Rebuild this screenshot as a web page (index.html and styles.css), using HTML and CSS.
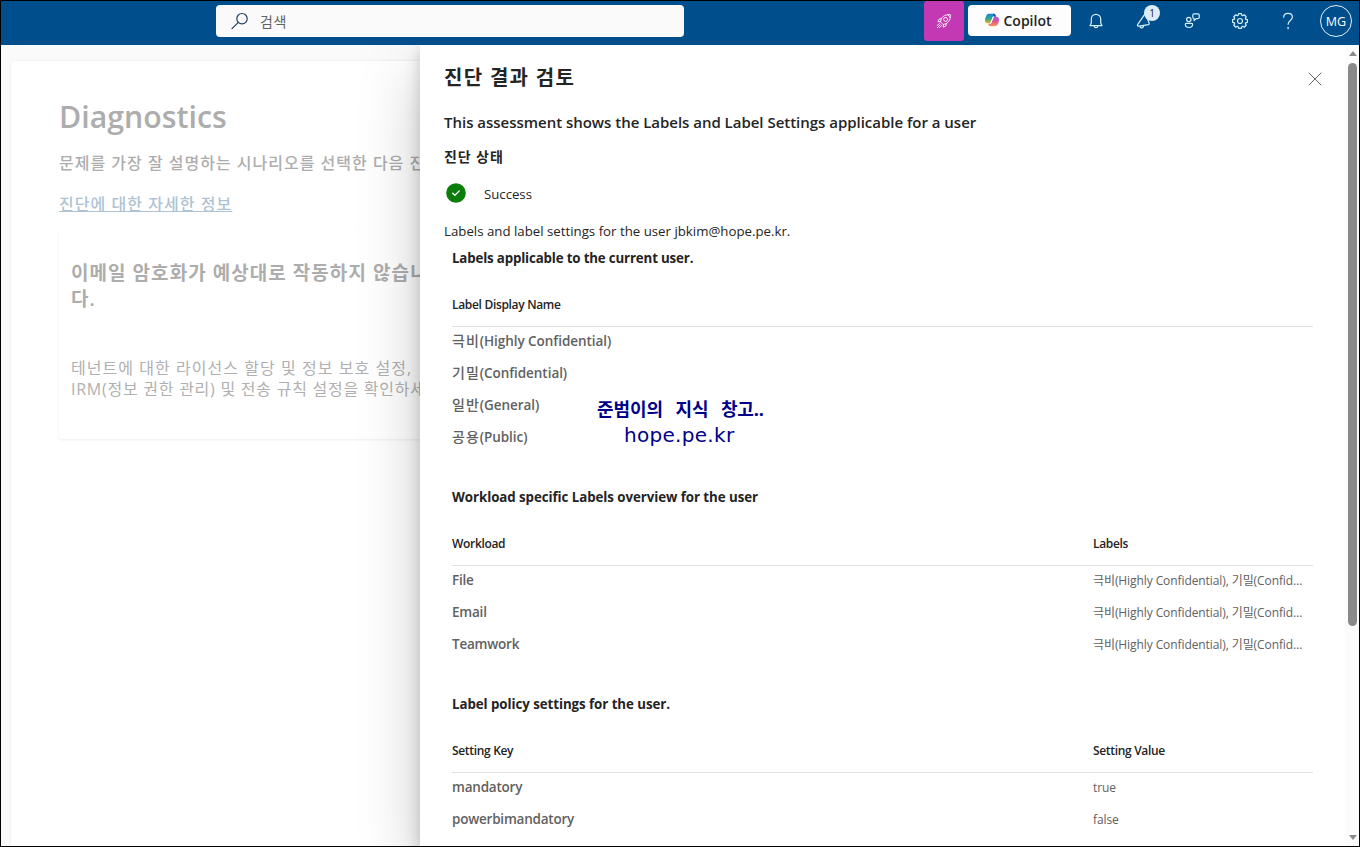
FILE: index.html
```html
<!DOCTYPE html>
<html lang="ko">
<head>
    <meta charset="UTF-8">
    <meta name="viewport" content="width=device-width, initial-scale=1.0">
    <title>Diagnostics</title>
    <link rel="stylesheet" href="styles.css">
</head>
<body>
    <div class="window">
        <header class="topbar">
            <div class="search">
                <svg width="18" height="18" viewBox="0 0 18 18"><circle cx="11" cy="6.7" r="5.2"/><path d="M7.3 10.4 1 16.7"/></svg>
                <span>검색</span>
            </div>
            <div class="actions">
                <button class="rocket">
                    <svg width="16" height="16" viewBox="0 0 16 16">
                        <path d="M4.6 8.6C4.8 4.4 8 1.3 14.3 1.6 14.8 7.8 11.7 11 7.4 11.4z"/>
                        <circle cx="9.6" cy="6.4" r="2"/>
                        <path d="M5.3 5.6 3 6.2 1.9 8.7l2.7-.1M10.4 10.7l-.6 2.3-2.5 1.2.1-2.8M11.6 1.7l2.7 2.8M3.5 10.4 1.2 12.5M5.6 12.5l-2.2 2.3M4.3 11.7 1.3 14.7"/>
                    </svg>
                </button>
                <button class="copilot">
                    <svg width="14" height="14" viewBox="0 0 14 14">
                        <defs>
                            <linearGradient id="cp-left" x1="0" y1="0" x2="0" y2="1"><stop offset="0" stop-color="#1683d8"/><stop offset=".55" stop-color="#35a884"/><stop offset="1" stop-color="#e9b52d"/></linearGradient>
                            <linearGradient id="cp-right" x1="0" y1="0" x2="0" y2="1"><stop offset="0" stop-color="#9b5be0"/><stop offset=".5" stop-color="#e2558c"/><stop offset="1" stop-color="#f39a58"/></linearGradient>
                        </defs>
                        <path fill="url(#cp-left)" d="M4.5.8h4c1.2 0 1.8.7 2.1 1.6l.3.9H9.2c-1 0-1.5.6-1.8 1.5L6.3 8.6C6 9.6 5.4 10.2 4.3 10.2H2.6C.9 10.2 0 9.2 0 7.6 0 5.5.7 3.6 1.5 2.2 2.2 1.2 3.2.8 4.5.8z"/>
                        <path fill="url(#cp-right)" d="M9.5 13.2h-4c-1.2 0-1.8-.7-2.1-1.6l-.3-.9h1.7c1 0 1.5-.6 1.8-1.5l1.1-3.8C8 4.4 8.6 3.8 9.7 3.8h1.7c1.7 0 2.6 1 2.6 2.6 0 2.1-.7 4-1.5 5.4-.7 1-1.7 1.4-3 1.4z"/>
                        <path fill="#2255b8" d="M8 .8h.6c1.1 0 1.7.7 2 1.5l.5 1.5H9.7c-.8 0-1-.5-1.2-1.2z"/>
                        <path stroke="#fff" stroke-width="1.1" d="M8.2 4.300 5.800 9.900"/>
                    </svg>
                    <span>Copilot</span>
                </button>
                <button class="icon">
                    <svg width="16" height="16" viewBox="0 0 16 16"><path d="M2 12.7h12l-1.3-2.7V6a4.7 4.7 0 0 0-9.4 0v4zM6.2 12.9a1.8 1.8 0 0 0 3.6 0"/></svg>
                </button>
                <button class="icon">
                    <svg width="16" height="16" viewBox="0 0 16 16"><path d="M8.8 1.2 1.6 11.7c-.4.7-.2 1.3.5 1.5h1l9.3-1.6c.9-.2 1.1-.7.8-1.4L9.7 1.3c-.2-.5-.6-.5-.9-.1zM4 13.2c.3 1.5 1.3 2 2.4 1.5.8-.4 1.2-1.1 1.1-2"/></svg>
                    <span class="badge">1</span>
                </button>
                <button class="icon">
                    <svg width="16" height="16" viewBox="0 0 16 16"><circle cx="4.8" cy="6.5" r="2.2"/><path d="M2.2 10.4h5.5c.6 0 .9.3.9.9 0 2-1.3 3.2-3.6 3.2s-3.7-1.2-3.7-3.2c0-.6.3-.9.9-.9zM10.1.8h3.6c.9 0 1.6.6 1.6 1.5v1.8c0 .9-.7 1.5-1.6 1.5h-1.5L10.1 7.5V5.5c-.8-.1-1.3-.7-1.3-1.5V2.3c0-.9.5-1.5 1.3-1.5z"/></svg>
                </button>
                <button class="icon">
                    <svg width="18" height="18" viewBox="-9 -9 18 18"><path d="M-1.4-7.4H1.4L1.9-5.6 2.62-5.3 4.24-6.22 6.22-4.24 5.3-2.62 5.6-1.9 7.4-1.4V1.4L5.6 1.9 5.3 2.62 6.22 4.24 4.24 6.22 2.62 5.3 1.9 5.6 1.4 7.4H-1.4L-1.9 5.6-2.62 5.3-4.24 6.22-6.22 4.24-5.3 2.62-5.6 1.9-7.4 1.4V-1.4L-5.6-1.9-5.3-2.62-6.22-4.24-4.24-6.22-2.62-5.3-1.9-5.6z"/><circle r="2.5"/></svg>
                </button>
                <button class="icon">
                    <svg width="16" height="18" viewBox="0 0 16 18"><path d="M3.7 5.2C3.7 2.7 5.4 1.3 8 1.3s4.4 1.5 4.4 3.8c0 3.3-4.3 3.5-4.3 7.2"/><path d="M8.1 15.3v1.5"/></svg>
                </button>
                <div class="avatar">MG</div>
            </div>
        </header>

        <div class="content">
            <main class="page">
                <h1>Diagnostics</h1>
                <p class="desc">문제를 가장 잘 설명하는 시나리오를 선택한 다음 진단을 실행하세요.</p>
                <a class="more" href="#">진단에 대한 자세한 정보</a>
                <div class="scenario">
                    <h2>이메일 암호화가 예상대로 작동하지 않습니<br>다.</h2>
                    <p>테넌트에 대한 라이선스 할당 및 정보 보호 설정,<br><span>IRM(정보 권한 관리) 및 전송 규칙 설정을 확인하세요.</span></p>
                </div>
            </main>

            <aside class="panel">
                <div class="panel-body">
                    <div class="panel-head">
                        <h2>진단 결과 검토</h2>
                        <svg class="close" width="14" height="14" viewBox="0 0 14 14"><path d="M1 1l12 12M13 1 1 13"/></svg>
                    </div>
                    <h3 class="assessment">This assessment shows the Labels and Label Settings applicable for a user</h3>
                    <h4 class="status-title">진단 상태</h4>
                    <div class="status">
                        <svg width="20" height="20" viewBox="0 0 20 20"><circle cx="10" cy="10" r="9.8"/><path d="M6.7 10.2 8.9 12.3 13.3 7.9"/></svg>
                        <span>Success</span>
                    </div>
                    <p class="summary">Labels and label settings for the user jbkim@hope.pe.kr.</p>

                    <section>
                        <h5 class="tight">Labels applicable to the current user.</h5>
                        <div class="row head"><span>Label Display Name</span></div>
                        <div class="row label"><b><i>극비</i>(Highly Confidential)</b></div>
                        <div class="row label"><b><i>기밀</i>(Confidential)</b></div>
                        <div class="row label"><b><i>일반</i>(General)</b></div>
                        <div class="row label"><b><i>공용</i>(Public)</b></div>
                    </section>

                    <section>
                        <h5>Workload specific Labels overview for the user</h5>
                        <div class="row head"><span>Workload</span><span>Labels</span></div>
                        <div class="row"><b>File</b><span>극비(Highly Confidential), 기밀(Confidential), 일반(General)</span></div>
                        <div class="row"><b>Email</b><span>극비(Highly Confidential), 기밀(Confidential), 일반(General)</span></div>
                        <div class="row"><b>Teamwork</b><span>극비(Highly Confidential), 기밀(Confidential), 일반(General)</span></div>
                    </section>

                    <section>
                        <h5>Label policy settings for the user.</h5>
                        <div class="row head"><span>Setting Key</span><span>Setting Value</span></div>
                        <div class="row"><b>mandatory</b><span>true</span></div>
                        <div class="row"><b>powerbimandatory</b><span>false</span></div>
                    </section>

                    <div class="watermark">
                        <div class="wm-ko">준범이의 지식 창고..</div>
                        <div class="wm-en">hope.pe.kr</div>
                    </div>
                </div>
                <div class="scrollbar">
                    <i class="up"></i>
                    <i class="thumb"></i>
                    <i class="down"></i>
                </div>
            </aside>
        </div>
    </div>
</body>
</html>
```
FILE: styles.css
```css
* {
    box-sizing: border-box;
}
body {
    margin: 0;
    font-family: "Open Sans", "Noto Sans CJK KR", sans-serif;
    color: #242424;
}
h1, h2, h3, h4, h5, p {
    margin: 0;
    font-weight: 600;
    white-space: nowrap;
}
svg {
    display: block;
    fill: none;
    stroke-linejoin: round;
    stroke-linecap: round;
}
button {
    border: none;
    padding: 0;
    background: none;
    font-family: inherit;
}
.window {
    width: 1360px;
    height: 847px;
    border: 1px solid #000;
    display: flex;
    flex-direction: column;
    overflow: hidden;
}

/* top bar */
.topbar {
    height: 44px;
    flex: none;
    background: #004e8c;
    display: flex;
    justify-content: space-between;
    padding-left: 215px;
}
.search {
    width: 468px;
    height: 32px;
    margin-top: 4px;
    padding-left: 15px;
    border-radius: 4px;
    background: #fafafa;
    display: flex;
    align-items: center;
    gap: 11px;
    font-size: 14px;
    letter-spacing: .5px;
    color: #616161;
}
.search svg {
    stroke: #1f3f63;
    stroke-width: 1.2;
}
.search span {
    margin-top: -1px;
}
.actions {
    display: flex;
    height: 40px;
    align-items: center;
}
.rocket {
    width: 40px;
    height: 40px;
    border-radius: 3px;
    background: #c239b3;
    display: flex;
    align-items: center;
    justify-content: center;
    margin-right: 4px;
}
.rocket svg {
    stroke: #fff;
    stroke-width: .9;
}
.copilot {
    width: 103px;
    height: 31px;
    margin: 0 1px 2px 0;
    padding-right: 2px;
    border-radius: 4px;
    background: #fdfdfd;
    display: flex;
    align-items: center;
    justify-content: center;
    gap: 4px;
    font-size: 14px;
    font-weight: 600;
    color: #242424;
}
.icon {
    position: relative;
    width: 48px;
    height: 40px;
    display: flex;
    align-items: center;
    justify-content: center;
}
.icon svg {
    stroke: #d4f2ff;
    stroke-width: 1.2;
}
.badge {
    position: absolute;
    left: 24px;
    top: 4px;
    width: 16px;
    height: 16px;
    border-radius: 50%;
    background: #dcecf9;
    color: #242424;
    font-size: 10px;
    line-height: 16px;
    text-align: center;
}
.avatar {
    width: 32px;
    height: 32px;
    margin: 0 7px 0 8px;
    border: 1px solid #e3f1fb;
    border-radius: 50%;
    color: #fff;
    font-size: 12.5px;
    line-height: 32px;
    text-align: center;
}

/* page behind the panel */
.content {
    flex: 1;
    min-height: 0;
    display: flex;
    background: #fafafa;
    overflow: hidden;
}
.page {
    width: 409px;
    flex: none;
    margin: 16px 0 0 10px;
    padding: 36px 0 0 48px;
    background: #fff;
    border-radius: 4px 0 0 0;
    box-shadow: 0 0 3px rgba(0, 0, 0, .08);
    color: #adadad;
}
.page h1 {
    font-size: 30.3px;
    line-height: 40px;
}
.page .desc {
    margin-top: 14px;
    font-size: 16px;
    line-height: 24px;
    letter-spacing: 1px;
    font-weight: 500;
}
.page .more {
    display: inline-block;
    margin-top: 17px;
    font-size: 16px;
    line-height: 24px;
    letter-spacing: 1.05px;
    font-weight: 500;
    color: #adc3d3;
}
.scenario {
    height: 209px;
    margin-top: 14px;
    padding: 30px 0 0 12px;
    border-radius: 4px 0 0 4px;
    box-shadow: 0 1px 3px rgba(0, 0, 0, .08);
}
.scenario h2 {
    font-size: 19px;
    line-height: 26px;
    letter-spacing: 1.05px;
}
.scenario p {
    margin-top: 46px;
    font-size: 16px;
    line-height: 21px;
    letter-spacing: 1.05px;
    font-weight: 400;
    color: #b0b0b0;
}
.scenario p span {
    letter-spacing: .75px;
}

/* result panel */
.panel {
    position: relative;
    flex: 1;
    display: flex;
    background: #fff;
    box-shadow: 0 25.6px 57.6px rgba(0, 0, 0, .22), 0 4.8px 14.4px rgba(0, 0, 0, .18);
}
.panel-body {
    flex: 1;
    padding: 17px 0 0 24px;
    overflow: hidden;
}
.panel-head {
    display: flex;
    justify-content: space-between;
    align-items: center;
    height: 28px;
    padding-right: 23px;
}
.panel-head h2 {
    padding-top: 3px;
    font-size: 20px;
    line-height: 28px;
    letter-spacing: 1.3px;
}
.close {
    margin-top: 6px;
    stroke: #666;
    stroke-width: 1;
}
.assessment {
    margin-top: 21px;
    font-size: 15px;
    line-height: 22px;
    letter-spacing: -.02px;
}
.status-title {
    margin-top: 14px;
    font-size: 14px;
    line-height: 20px;
    letter-spacing: .9px;
}
.status {
    display: flex;
    align-items: center;
    gap: 18px;
    height: 20px;
    margin: 16px 0 0 2px;
    font-size: 13.2px;
    line-height: 20px;
}
.status span {
    padding-top: 2px;
}
.status circle {
    fill: #0b7d0b;
}
.status path {
    stroke: #fff;
    stroke-width: 1.3;
}
.summary {
    margin: 18px 0 7px;
    font-size: 13.25px;
    line-height: 20px;
    font-weight: 400;
}
section {
    width: 861px;
    margin: 0 0 32px 8px;
}
section h5 {
    margin-bottom: 16px;
    font-size: 13.3px;
    line-height: 20px;
    letter-spacing: -.06px;
    font-weight: 700;
}
section h5.tight {
    letter-spacing: -.16px;
}
.row {
    display: grid;
    grid-template-columns: 641px 212px;
    height: 32px;
    line-height: 28px;
    font-size: 12px;
    color: #616161;
    white-space: nowrap;
}
.row b {
    font-size: 13.5px;
    font-weight: 600;
    letter-spacing: -.22px;
}
.row.label b {
    letter-spacing: -.05px;
}
.row i {
    font-style: normal;
    font-weight: 500;
    font-size: 14px;
    letter-spacing: 1px;
}
.row span {
    overflow: hidden;
    text-overflow: ellipsis;
    line-height: 30px;
    letter-spacing: -.09px;
}
.row.head {
    height: 43px;
    font-weight: 600;
    color: #242424;
    border-bottom: 1px solid #e0e0e0;
}
.row.head span {
    line-height: 41px;
    letter-spacing: -.32px;
}

/* site mark laid over the table */
.watermark {
    position: absolute;
    left: 177px;
    top: 351px;
    color: #00008b;
    white-space: nowrap;
}
.wm-ko {
    font-size: 18px;
    line-height: 26px;
    font-weight: 700;
    word-spacing: 8px;
    letter-spacing: -.1px;
}
.wm-en {
    padding-left: 27px;
    font-family: "DejaVu Sans", sans-serif;
    font-size: 20px;
    line-height: 26px;
    letter-spacing: .3px;
}

.scrollbar {
    width: 14px;
    flex: none;
    padding: 6px 2px 6px 3px;
    background: #fcfcfc;
    display: flex;
    flex-direction: column;
    align-items: center;
}
.up, .down {
    border: 4.5px solid transparent;
    border-top-width: 0;
    border-bottom: 5px solid #8a8a8a;
}
.down {
    margin-top: auto;
    border-bottom: 0;
    border-top: 5px solid #8a8a8a;
}
.thumb {
    width: 9px;
    height: 563px;
    margin-top: 7px;
    border-radius: 5px;
    background: #8a8a8a;
}
```
